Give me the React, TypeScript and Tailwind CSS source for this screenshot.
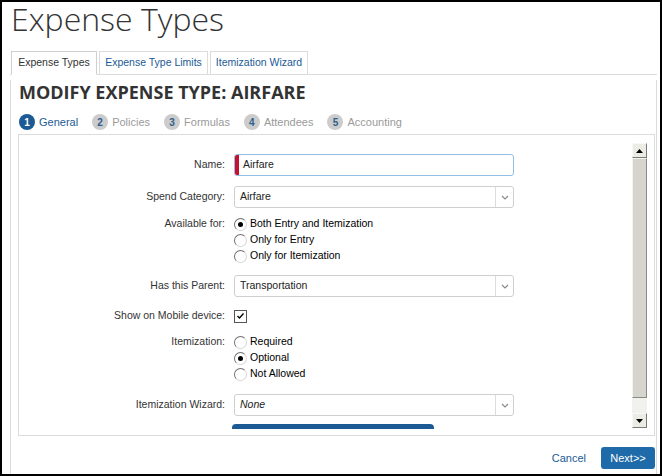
import React from "react";

const steps = [
  { n: 1, label: "General", active: true },
  { n: 2, label: "Policies" },
  { n: 3, label: "Formulas" },
  { n: 4, label: "Attendees" },
  { n: 5, label: "Accounting" },
];

function Radio({ checked }: { checked?: boolean }) {
  return (
    <span className="w-[13px] h-[13px] rounded-full border border-[#6f6f6f] border-r-[#d6d6d6] border-b-[#d6d6d6] bg-white flex items-center justify-center shrink-0">
      {checked && <span className="w-[5px] h-[5px] rounded-full bg-black" />}
    </span>
  );
}

function RadioGroup({ options, selected }: { options: string[]; selected: number }) {
  return (
    <div className="flex flex-col">
      {options.map((o, i) => (
        <div key={o} className="h-[16px] flex items-center gap-[3px]">
          <Radio checked={i === selected} />
          <span className="text-[10.5px] text-black">{o}</span>
        </div>
      ))}
    </div>
  );
}

function Select({ value, italic }: { value: string; italic?: boolean }) {
  return (
    <div className="w-[280px] h-[22px] border border-[#cfcfcf] rounded-[3px] flex items-center bg-white">
      <span className={"flex-1 pl-[5px] text-[10.5px] text-[#222] " + (italic ? "italic" : "")}>{value}</span>
      <span className="w-[18px] h-full border-l border-[#dcdcdc] flex items-center justify-center">
        <svg width="8" height="5" viewBox="0 0 8 5">
          <polyline points="1,1 4,4 7,1" fill="none" stroke="#8a8a8a" strokeWidth="1.2" />
        </svg>
      </span>
    </div>
  );
}

function Row({ label, children, className }: { label: string; children: React.ReactNode; className?: string }) {
  return (
    <div className={"flex " + (className || "")}>
      <div className="w-[206px] text-right text-[10.5px] text-[#333] shrink-0">{label}</div>
      <div className="ml-[9px]">{children}</div>
    </div>
  );
}

function ScrollButton({ up }: { up?: boolean }) {
  return (
    <div className="h-[15px] w-[15px] bg-[#ecebe4] border border-[#f8f8f8] border-r-[#7a7a7a] border-b-[#7a7a7a] flex items-center justify-center">
      <svg width="7" height="4" viewBox="0 0 7 4">
        {up ? <polygon points="0,4 7,4 3.5,0" fill="#000" /> : <polygon points="0,0 7,0 3.5,4" fill="#000" />}
      </svg>
    </div>
  );
}

export default function App() {
  return (
    <div className="w-[662px] h-[476px] border-2 border-black bg-white overflow-hidden font-['Liberation_Sans',Arial,sans-serif]">
      <h1 className="pl-[9px] text-[32px] leading-[34px] font-light font-['Open_Sans',sans-serif] text-[#333]">
        Expense Types
      </h1>

      <div className="mt-[15px] ml-[8px] mr-[3px] flex items-end gap-[2px] h-[24px] border-b border-[#dcdcdc] pl-[1px]">
        <div className="w-[86px] h-[24px] -mb-px border border-[#cfcfcf] border-b-white bg-white flex items-center justify-center text-[10.5px] text-[#333]">
          Expense Types
        </div>
        <div className="w-[109px] h-[23px] border border-b-0 border-[#dcdcdc] flex items-center justify-center text-[10.5px] text-[#1b5a94]">
          Expense Type Limits
        </div>
        <div className="w-[98px] h-[23px] border border-b-0 border-[#dcdcdc] flex items-center justify-center text-[10.5px] text-[#1b5a94]">
          Itemization Wizard
        </div>
      </div>

      <div className="ml-[8px] mr-[3px] border-l border-r border-[#dcdcdc] h-[420px]">
        <h2 className="mt-[5px] pl-[8px] text-[18px] leading-[24px] font-bold font-['Open_Sans',sans-serif] text-[#333]">
          MODIFY EXPENSE TYPE: AIRFARE
        </h2>

        <div className="mt-[10px] pl-[8px] flex items-center h-[16px]">
          {steps.map((s) => (
            <div key={s.n} className="flex items-center mr-[14px]">
              <span
                className={
                  "w-[16px] h-[16px] rounded-full flex items-center justify-center text-[10px] font-bold " +
                  (s.active ? "bg-[#1b5a94] text-white" : "bg-[#cccccc] text-[#2f5f8c]")
                }
              >
                {s.n}
              </span>
              <span className={"ml-[4px] text-[11px] " + (s.active ? "text-[#1b5a94]" : "text-[#9a9a9a]")}>{s.label}</span>
            </div>
          ))}
        </div>

        <div className="mt-[4px] ml-[7px] mr-px border border-[#dcdcdc] h-[302px] flex">
          <div className="flex-1 h-[294px] overflow-hidden pt-[19px]">
            <Row label="Name:" className="items-center">
              <div className="w-[280px] h-[22px] border border-[#94bde3] rounded-[3px] flex items-center bg-white overflow-hidden">
                <span className="w-[4px] h-full bg-[#c8102e]" />
                <span className="pl-[4px] text-[10.5px] text-[#222]">Airfare</span>
              </div>
            </Row>
            <Row label="Spend Category:" className="items-center mt-[10px]">
              <Select value="Airfare" />
            </Row>
            <Row label="Available for:" className="mt-[8px]">
              <RadioGroup
                options={["Both Entry and Itemization", "Only for Entry", "Only for Itemization"]}
                selected={0}
              />
            </Row>
            <Row label="Has this Parent:" className="items-center mt-[11px]">
              <Select value="Transportation" />
            </Row>
            <Row label="Show on Mobile device:" className="items-center mt-[11px] h-[16px]">
              <span className="w-[13px] h-[13px] border border-[#555] bg-white flex items-center justify-center">
                <svg width="9" height="8" viewBox="0 0 9 8">
                  <polyline points="1.5,4 3.5,6 7.5,1.5" fill="none" stroke="#000" strokeWidth="1.4" />
                </svg>
              </span>
            </Row>
            <Row label="Itemization:" className="mt-[10px]">
              <RadioGroup options={["Required", "Optional", "Not Allowed"]} selected={1} />
            </Row>
            <Row label="Itemization Wizard:" className="items-center mt-[12px]">
              <Select value="None" italic />
            </Row>
            <div className="ml-[213px] mt-[8px] w-[202px] h-[30px] rounded-[4px] bg-[#1b5a94]" />
          </div>

          <div className="mt-[8px] mr-[7px] w-[15px] h-[285px] flex flex-col">
            <ScrollButton up />
            <div className="h-[240px] bg-[#d6d5cd] border border-[#f4f4f0] border-r-[#888] border-b-[#888]" />
            <div className="flex-1 bg-[#f1f1ee]" />
            <ScrollButton />
          </div>
        </div>

        <div className="mt-[11px] mr-px flex items-center justify-end">
          <span className="text-[11px] text-[#1b5a94]">Cancel</span>
          <button className="ml-[15px] w-[54px] h-[22px] rounded-[3px] bg-[#1f6aa8] text-white text-[11px]">
            Next&gt;&gt;
          </button>
        </div>
      </div>
    </div>
  );
}
